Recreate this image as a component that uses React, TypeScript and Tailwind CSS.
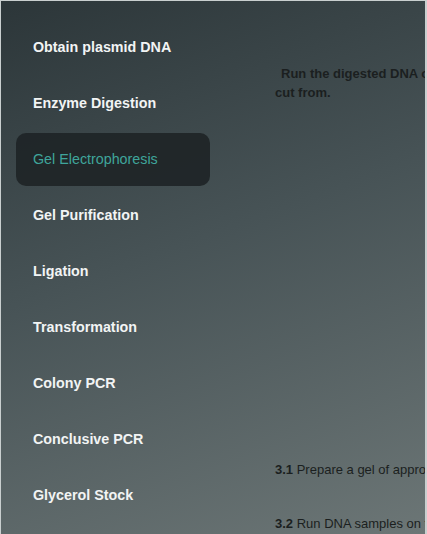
const steps = [
  "Obtain plasmid DNA",
  "Enzyme Digestion",
  "Gel Electrophoresis",
  "Gel Purification",
  "Ligation",
  "Transformation",
  "Colony PCR",
  "Conclusive PCR",
  "Glycerol Stock",
];

const active = "Gel Electrophoresis";

export default function App() {
  return (
    <div
      className="w-[427px] h-[534px] overflow-hidden flex border-l border-t border-r-2 border-[#c9cfcf] bg-[linear-gradient(160deg,#2c3639_0%,#475356_45%,#6c7676_100%)]"
      style={{ fontFamily: '"Liberation Sans", Arial, sans-serif' }}
    >
      <nav className="w-[274px] shrink-0 pl-[15px] pt-[20px] flex flex-col gap-[3px]">
        {steps.map((s) => (
          <div
            key={s}
            className={
              s === active
                ? "w-[194px] h-[53px] flex items-center pl-[17px] rounded-[10px] bg-[#1e2426]/90 text-[#3fa59b] text-[14.3px]"
                : "w-[194px] h-[53px] flex items-center pl-[17px] text-[#f2f4f4] text-[14.3px] font-bold"
            }
          >
            {s}
          </div>
        ))}
      </nav>
      <main className="flex-1 min-w-0 text-[13px] text-[#1b1f20] whitespace-nowrap">
        <div className="pt-[63px] leading-[19px] font-bold">
          <p className="pl-[6px]">Run the digested DNA on an agarose gel</p>
          <p>cut from.</p>
        </div>
        <p className="mt-[358px]">
          <b>3.1</b> Prepare a gel of appropriate agarose
        </p>
        <p className="mt-[34px]">
          <b>3.2</b> Run DNA samples on the gel
        </p>
      </main>
    </div>
  );
}
